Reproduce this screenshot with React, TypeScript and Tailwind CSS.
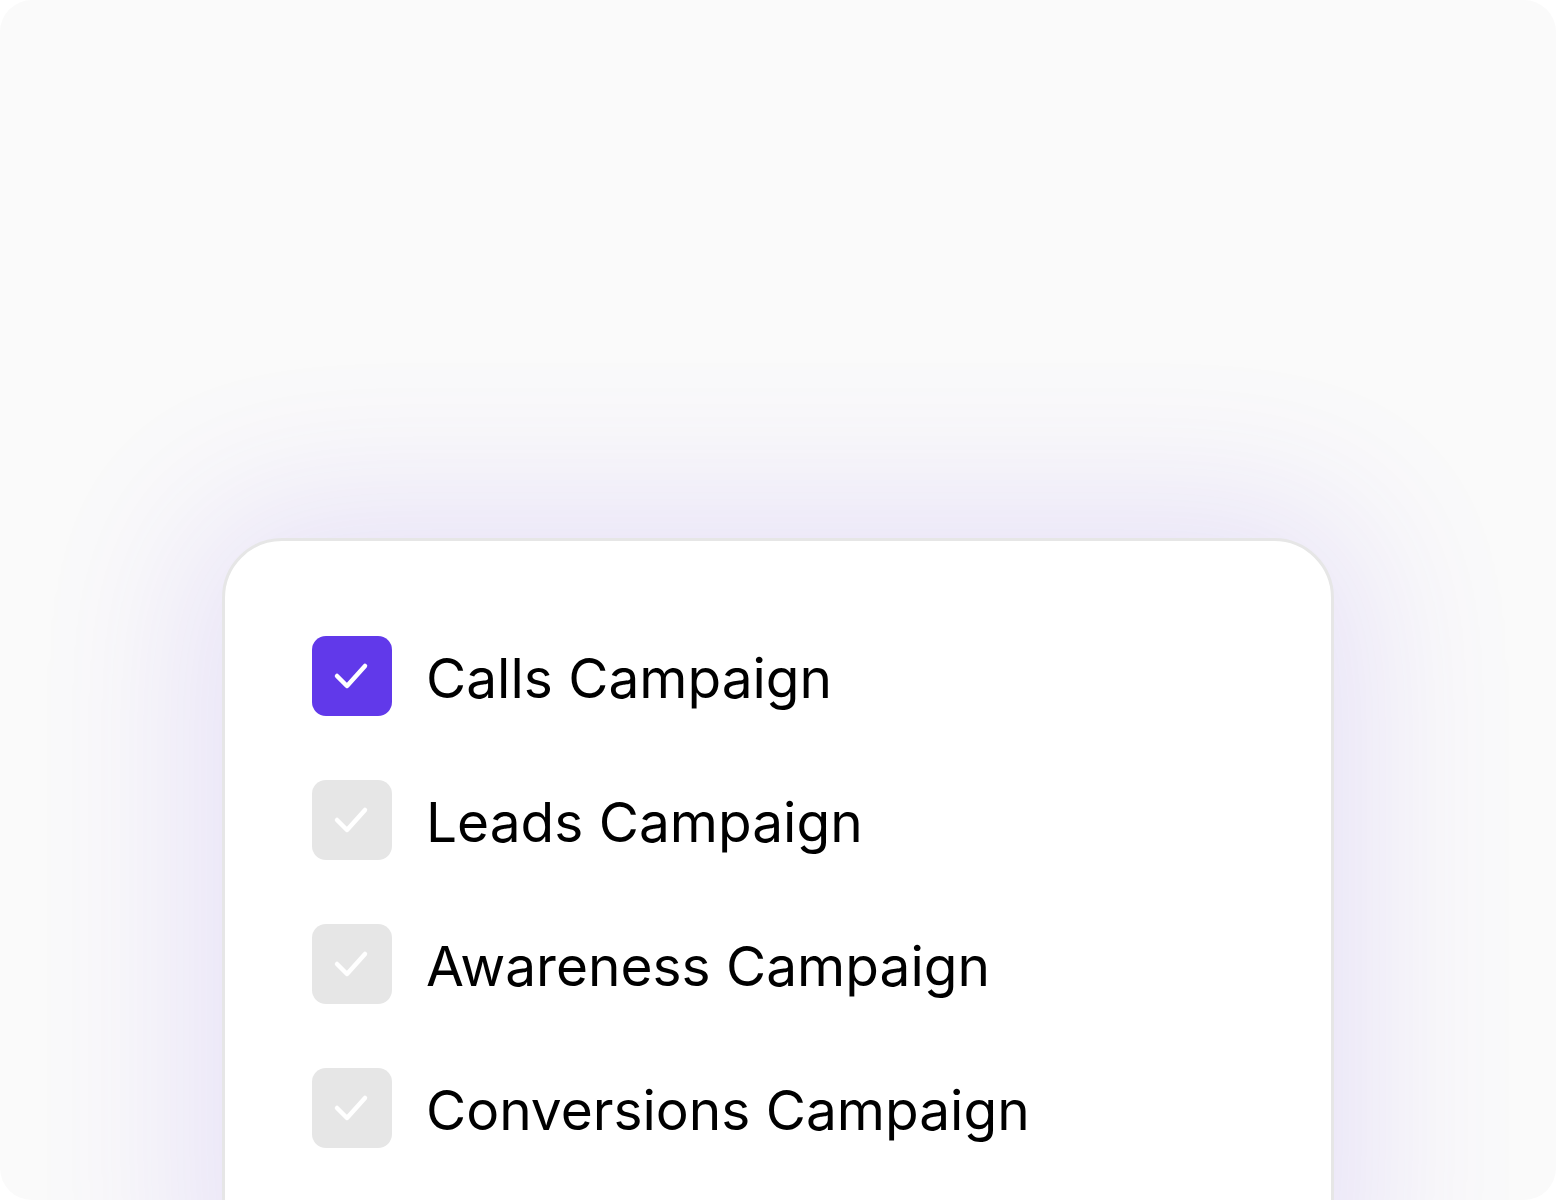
const campaigns = [
  { label: "Calls Campaign", checked: true },
  { label: "Leads Campaign", checked: false },
  { label: "Awareness Campaign", checked: false },
  { label: "Conversions Campaign", checked: false },
];

function CheckBox({ checked }: { checked: boolean }) {
  return (
    <div
      className={`w-[80px] h-[80px] rounded-[14px] shrink-0 flex items-center justify-center ${
        checked ? "bg-[#6139ea]" : "bg-[#e6e6e6]"
      }`}
    >
      <svg width="80" height="80" viewBox="0 0 80 80" fill="none">
        <path d="M25 40 L35 50 L53 30" stroke="white" strokeWidth={4.5} strokeLinecap="round" strokeLinejoin="round" />
      </svg>
    </div>
  );
}

export default function App() {
  return (
    <div className="w-[1556px] h-[1200px] bg-white">
      <div
        className="w-full h-full rounded-[32px] bg-[#fafafa] overflow-hidden pt-[538px] px-[222px]"
        style={{ fontFamily: "Inter, 'Noto Sans', sans-serif" }}
      >
        <div className="h-[800px] bg-white rounded-[60px] border-[3px] border-[#e6e6e6] shadow-[0_0_160px_30px_rgba(98,57,234,0.13)] pt-[95px] pl-[87px]">
          <div className="flex flex-col gap-[64px]">
            {campaigns.map((c) => (
              <div key={c.label} className="flex items-center gap-[34px]">
                <CheckBox checked={c.checked} />
                <span className="text-[55px] leading-none text-black pt-[4px]">{c.label}</span>
              </div>
            ))}
          </div>
        </div>
      </div>
    </div>
  );
}
